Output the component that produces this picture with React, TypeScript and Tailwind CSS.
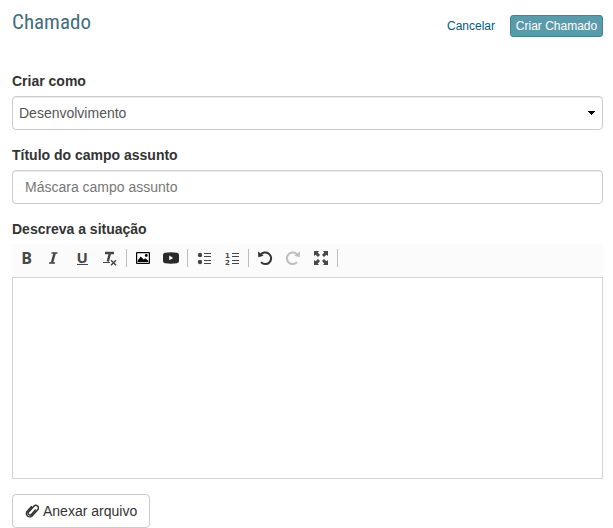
import type { ReactNode } from "react";

function Tool({ label, children }: { label: string; children: ReactNode }) {
  return (
    <button aria-label={label} className="flex h-7 w-7 shrink-0 items-center justify-center text-[#474747]">
      {children}
    </button>
  );
}

function Separator() {
  return (
    <div className="flex w-[5px] shrink-0 justify-center">
      <div className="h-[18px] w-px bg-[#bcbcbc]" />
    </div>
  );
}

function Toolbar() {
  return (
    <div className="flex h-[33px] items-center bg-[#fbfbfb] pb-[5px]">
      <Tool label="Negrito">
        <span className="pl-px font-['Open_Sans',sans-serif] text-base leading-4 font-bold">B</span>
      </Tool>
      <Tool label="Itálico">
        <svg width="16" height="16" viewBox="0 0 16 16" fill="none" stroke="currentColor">
          <path d="M5.5 3h6M3 13h6" strokeWidth="1.7" />
          <path d="M8.7 3L5.9 13" strokeWidth="2.5" />
        </svg>
      </Tool>
      <Tool label="Sublinhado">
        <span className="h-[13px] w-[11px] border-b border-[#474747] text-center font-['Open_Sans',sans-serif] text-[15px] leading-[10px] font-bold">U</span>
      </Tool>
      <Tool label="Remover formatação">
        <svg width="16" height="16" viewBox="0 0 16 16" fill="none" stroke="currentColor">
          <path d="M3 3h9M8 3L5.8 11.5" strokeWidth="2.4" />
          <path d="M1 12.5h7" />
          <path d="M9 10.3l5 5M14 10.3l-5 5" strokeWidth="1.5" />
        </svg>
      </Tool>
      <Separator />
      <Tool label="Imagem">
        <svg width="14" height="12" viewBox="0 0 14 12">
          <rect x=".6" y=".6" width="12.8" height="10.8" rx=".4" fill="#fff" stroke="#000" strokeWidth="1.2" />
          <path d="M1.7 10V8.5l3-4.1 3 3.1 1.7-1.2 2.8 2.5V10z" fill="#000" />
          <circle cx="10.3" cy="3.5" r="1.4" fill="#000" />
        </svg>
      </Tool>
      <Tool label="Vídeo">
        <svg width="16" height="12" viewBox="0 0 16 12">
          <path d="M2 .7Q8 0 14 .7q2 .2 2 2.3v6q0 2-2 2.3Q8 12 2 11.3 0 11 0 9V3Q0 .9 2 .7z" fill="#292929" />
          <path d="M6.2 3.5v4.8l4-2.4z" fill="#fff" />
        </svg>
      </Tool>
      <Separator />
      <Tool label="Lista com marcadores">
        <svg width="14" height="14" viewBox="0 0 14 14" stroke="currentColor">
          <g fill="currentColor" stroke="none"><circle cx="3" cy="4" r="2.2" /><circle cx="3" cy="11" r="2.2" /></g>
          <path d="M7 2.5h7M7 5.5h7M7 9.5h7M7 12.5h7" strokeWidth="1.2" />
        </svg>
      </Tool>
      <Tool label="Lista numerada">
        <span className="flex items-center gap-px pr-px">
          <span className="flex w-[6px] flex-col pt-1 text-center font-['DejaVu_Sans',sans-serif] text-[7px] leading-[7px] font-bold"><span>1</span><span>2</span></span>
          <svg width="7" height="14" viewBox="0 0 7 14" stroke="currentColor">
            <path d="M0 2.5h7M0 5.5h7M0 9.5h7M0 12.5h7" strokeWidth="1.2" />
          </svg>
        </span>
      </Tool>
      <Separator />
      <Tool label="Desfazer">
        <svg width="16" height="16" viewBox="0 0 16 16" fill="none" stroke="#333" strokeWidth="2">
          <path d="M3.4 5.2A5.8 5.8 0 1 1 4 12.2" />
          <path d="M1 1.5l.3 5.7 5.3-1.5z" fill="#333" stroke="none" />
        </svg>
      </Tool>
      <Tool label="Refazer">
        <svg width="16" height="16" viewBox="0 0 16 16" fill="none" stroke="#bdbdbd" strokeWidth="2">
          <path d="M12.6 5.2A5.8 5.8 0 1 0 12 12.2" />
          <path d="M15 1.5l-.3 5.7-5.3-1.5z" fill="#bdbdbd" stroke="none" />
        </svg>
      </Tool>
      <Tool label="Maximizar">
        <svg width="14" height="14" viewBox="0 0 14 14" fill="currentColor">
          <path d="M0 0h5L3.7 1.6 6 4 4 6 1.6 3.7 0 5zM14 0v5l-1.6-1.3L10 6 8 4l2.3-2.4L9 0zM0 14V9l1.6 1.3L4 8l2 2-2.3 2.4L5 14zM14 14H9l1.3-1.6L8 10l2-2 2.4 2.3L14 9z" />
        </svg>
      </Tool>
      <Separator />
    </div>
  );
}

function Paperclip() {
  return (
    <svg width="14" height="16" viewBox="0 0 14 16" fill="none" stroke="#333" strokeWidth="1.5" strokeLinecap="round">
      <g transform="rotate(42 7 8)">
        <path d="M3.6 5.2V11.3a3.4 3.4 0 0 0 6.8 0V3.2a2.6 2.6 0 0 0-5.2 0V11a1.8 1.8 0 0 0 3.6 0V5" />
      </g>
    </svg>
  );
}

export default function App() {
  return (
    <main className="h-[528px] w-[613px] overflow-hidden bg-white pr-2.5 pl-3 font-['Liberation_Sans',sans-serif] text-sm leading-5 text-[#333]">
      <header className="flex h-[71px] items-start justify-between">
        <h1 className="pt-2 font-['Roboto_Condensed',Roboto,sans-serif] text-[21px] leading-7 text-[#426e7e]">Chamado</h1>
        <div className="flex items-center pt-[15px] text-xs">
          <button className="mr-[15px] text-[#06587d]">Cancelar</button>
          <button className="flex h-[22px] w-[93px] items-center justify-center rounded-[3px] border border-[#448491] bg-[#5a9bab] whitespace-nowrap text-white">Criar Chamado</button>
        </div>
      </header>
      <label className="block font-bold">Criar como</label>
      <div className="mt-[5px] flex h-[34px] items-center justify-between rounded border border-[#ccc] pr-[7px] pl-1.5 text-[#555] shadow-[inset_0_1px_1px_rgba(0,0,0,0.075)]">
        Desenvolvimento
        <svg width="7" height="4" viewBox="0 0 7 4" shapeRendering="crispEdges"><path d="M0 0h7v1H6v1H5v1H4v1H3V3H2V2H1V1H0z" fill="#000" /></svg>
      </div>
      <label className="mt-[15px] block font-bold">Título do campo assunto</label>
      <input className="mt-[5px] block h-[34px] w-full rounded border border-[#ccc] px-3 shadow-[inset_0_1px_1px_rgba(0,0,0,0.075)] outline-none placeholder:text-[#777]" placeholder="Máscara campo assunto" />
      <label className="mt-[15px] mb-[5px] block font-bold">Descreva a situação</label>
      <Toolbar />
      <div className="h-[202px] border border-[#d5d5d5]" />
      <button className="mt-[15px] flex h-[34px] w-[138px] items-center gap-1 rounded border border-[#ccc] pl-3 whitespace-nowrap">
        <Paperclip />
        Anexar arquivo
      </button>
    </main>
  );
}
